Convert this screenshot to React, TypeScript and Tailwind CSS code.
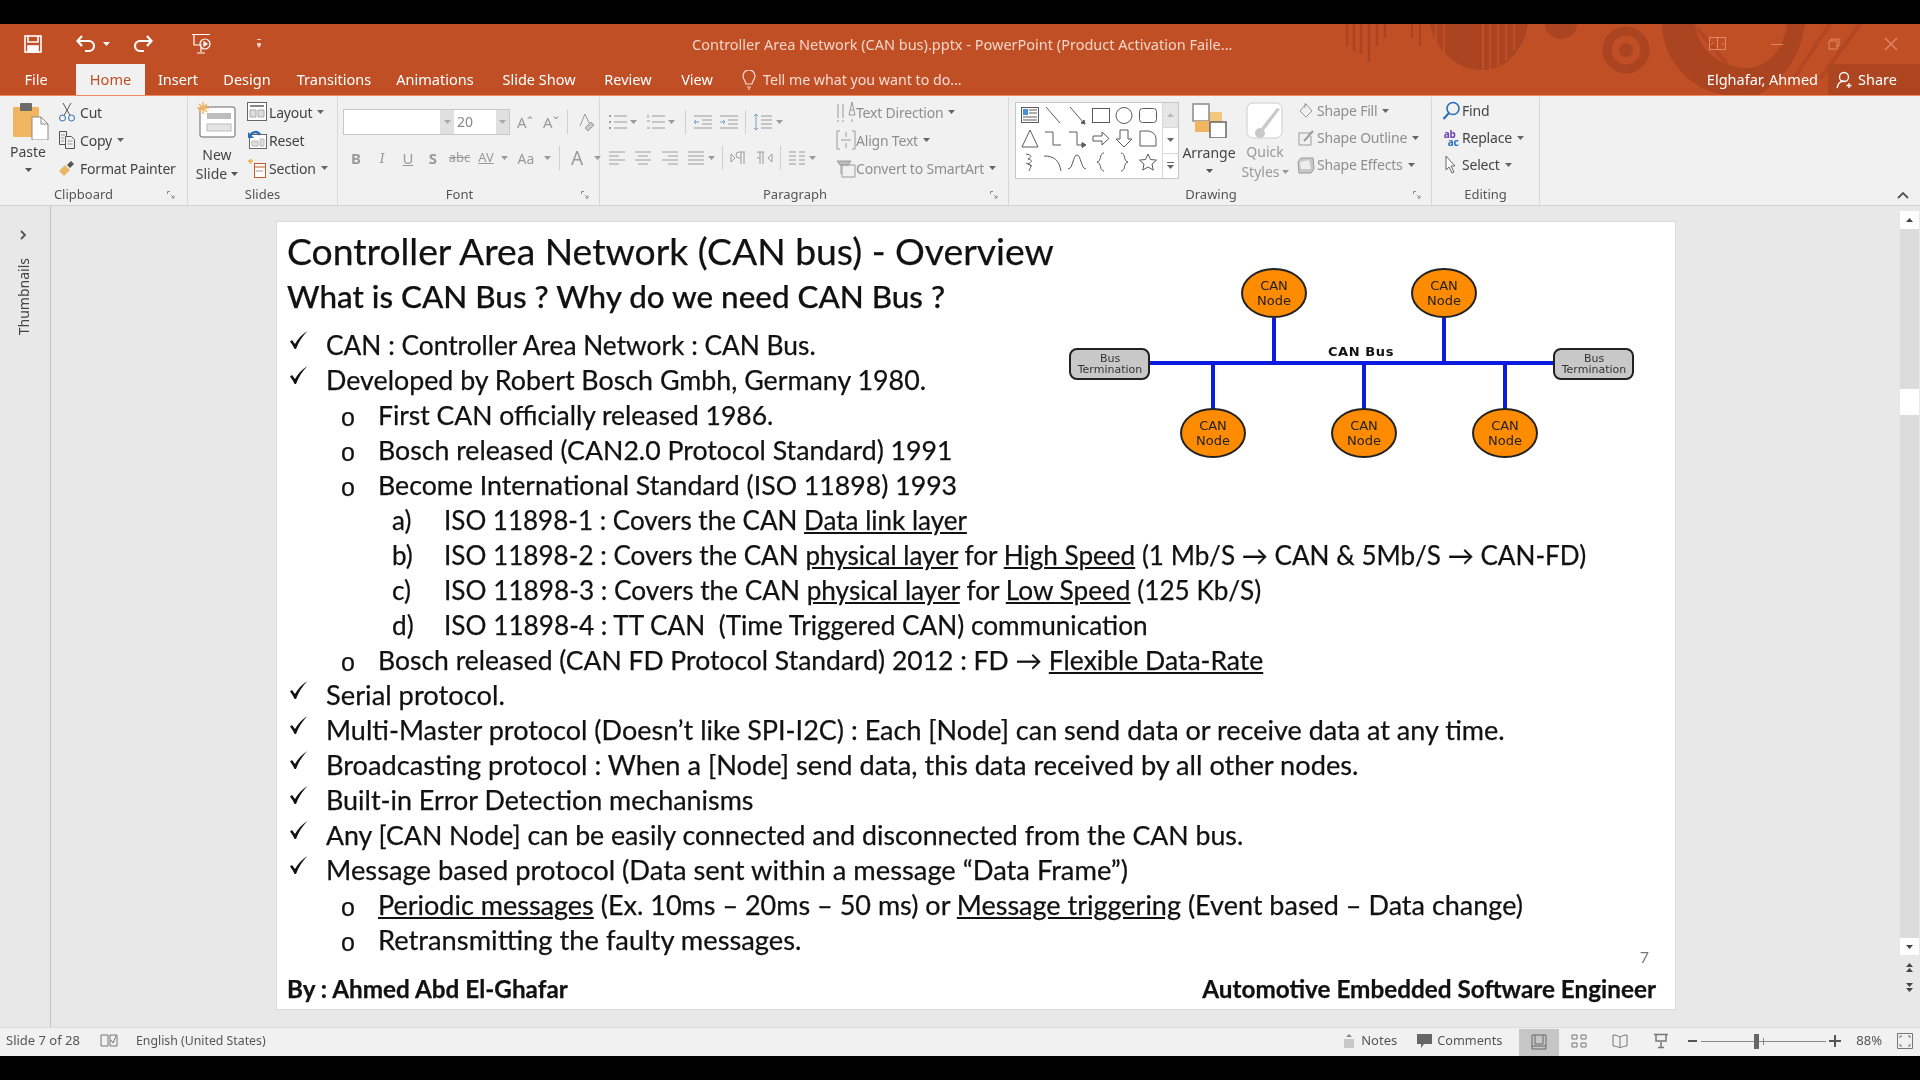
import React from "react";

const UI = "font-['Noto_Sans','Open_Sans',sans-serif]";

function Caret({ className = "" }: { className?: string }) {
  return (
    <svg width="7" height="4" viewBox="0 0 7 4" className={className}>
      <path d="M0 0h7L3.5 4z" fill="currentColor" />
    </svg>
  );
}

function Ico({ w = 18, h = 18, children, className = "" }: { w?: number; h?: number; children: React.ReactNode; className?: string }) {
  return (
    <svg width={w} height={h} viewBox={`0 0 ${w} ${h}`} fill="none" stroke="currentColor" strokeWidth="1" className={"shrink-0 " + className}>
      {children}
    </svg>
  );
}

function Launcher() {
  return (
    <svg width="8" height="8" viewBox="0 0 8 8" fill="none" stroke="#8a8a8a" strokeWidth="1" className="shrink-0">
      <path d="M.5 3V.5H3M4 4l3 3M7 4.5V7H4.5" />
    </svg>
  );
}

function Group({ w, label, launcher, labelPad = "", children }: { w: string; label: string; launcher?: boolean; labelPad?: string; children: React.ReactNode }) {
  return (
    <div className={`${w} flex flex-col h-[108px] mt-[1px] border-r border-[#d8d8d8]`}>
      <div className="flex h-[88px] min-h-0">{children}</div>
      <div className={`flex items-center h-[20px] text-[13px] text-[#555] ${labelPad}`}>
        <span className="flex-1 text-center">{label}</span>
        {launcher ? <span className="mr-[6px] flex"><Launcher /></span> : null}
      </div>
    </div>
  );
}

function SmallRow({ icon, label, caret, dim, iconW = "w-[22px]", gap = "ml-[1px]", h = "h-[28px]" }: { icon: React.ReactNode; label: string; caret?: boolean; dim?: boolean; iconW?: string; gap?: string; h?: string }) {
  return (
    <div className={`flex items-center ${h} text-[14px] tracking-[-0.2px] whitespace-nowrap ${dim ? "text-[#8f8f8f]" : "text-[#444]"}`}>
      <span className={`${iconW} flex justify-center`}>{icon}</span>
      <span className={gap}>{label}</span>
      {caret ? <Caret className="ml-[5px] text-[#666]" /> : null}
    </div>
  );
}

function Scissors() {
  return (
    <Ico w={18} h={20} className="text-[#2a6fb5]">
      <circle cx="4.5" cy="16" r="3" />
      <circle cx="13.5" cy="16" r="3" />
      <path d="M6 13.5 13 1M12 13.5 5 1" stroke="#555" />
    </Ico>
  );
}
function CopyI() {
  return (
    <Ico w={18} h={20} className="text-[#555]">
      <path d="M1.5 1.5h7v13h-7z" />
      <path d="M7.5 6.5h6l3 3v9h-9z" fill="#f1f1f1" />
      <path d="M3 5h4M3 8h3M3 11h3M9.5 11h5M9.5 14h5" stroke="#999" />
    </Ico>
  );
}
function Painter() {
  return (
    <svg width="18" height="18" viewBox="0 0 18 18">
      <path d="M1 12l6-6 5 5-6 6z" fill="#e9b765" />
      <path d="M9 6l4-4 3 3-4 4z" fill="#555" />
    </svg>
  );
}
function Clip() {
  return (
    <svg width="36" height="38" viewBox="0 0 36 38">
      <rect x="0" y="5" width="26" height="30" rx="1" fill="#f0b65f" />
      <rect x="7" y="1" width="12" height="8" rx="1" fill="#6b6b6b" />
      <path d="M19 15h9l7 7v16H19z" fill="#fff" stroke="#8a8a8a" />
      <path d="M28 15v7h7" fill="none" stroke="#8a8a8a" />
    </svg>
  );
}
function NewSlide() {
  return (
    <svg width="40" height="36" viewBox="0 0 40 36">
      <rect x="3" y="5" width="35" height="30" rx="2" fill="#fff" stroke="#666" />
      <rect x="10" y="11" width="24" height="6" fill="#bdbdbd" />
      <rect x="10" y="22" width="24" height="7" fill="#e5e5e5" stroke="#bbb" />
      <g stroke="#f0b65f" strokeWidth="1.5">
        <path d="M6 0v12M0 6h12M2 2l8 8M10 2l-8 8" />
      </g>
    </svg>
  );
}
function LayoutI() {
  return (
    <Ico w={20} h={20} className="text-[#666]">
      <rect x=".5" y=".5" width="19" height="18" fill="#fff" />
      <path d="M3 4h14" stroke="#888" strokeWidth="2" />
      <path d="M3 8h6v7H3zM11 8h6v7h-6z" fill="#ddd" stroke="#aaa" />
    </Ico>
  );
}
function ResetI() {
  return (
    <Ico w={20} h={20} className="text-[#666]">
      <rect x="2.5" y="4.5" width="17" height="14" fill="#fff" />
      <path d="M5 11h6v5H5zM13 9h4v7h-4z" fill="#ddd" stroke="#bbb" />
      <path d="M3 6c2-5 8-5 10-1" stroke="#2a6fb5" strokeWidth="2.5" />
      <path d="M1 2v6h6z" fill="#2a6fb5" stroke="none" />
    </Ico>
  );
}
function SectionI() {
  return (
    <Ico w={20} h={20} className="text-[#666]">
      <rect x="7.5" y="5.5" width="11" height="14" fill="#fff" stroke="#c55a2b" />
      <path d="M7 9h12" stroke="#c55a2b" />
      <path d="M1 3h5M3.500 1v5" stroke="#f0b65f" strokeWidth="2" />
      <path d="M9 13h7" stroke="#999" />
    </Ico>
  );
}
function Spin({ w }: { w: string }) {
  return (
    <span className={`${w} h-full bg-[#e0e0e0] flex items-center justify-center text-[#aaa]`}>
      <Caret />
    </span>
  );
}

function Shapes() {
  const s = "#5a5a5a";
  const cells: React.ReactNode[] = [
    <g key="a"><rect x="1.500" y="2.500" width="17" height="15" fill="#fff" /><rect x="3" y="4" width="5" height="6" fill="#4a90d9" stroke="none" /><path d="M9 5h8M9 8h8M3 12h14M3 15h14" /></g>,
    <path key="b" d="M3 2l14 16" />,
    <g key="c"><path d="M3 2l13 15" /><path d="M18 19l-4-1 3-3z" fill={s} /></g>,
    <rect key="d" x="1.500" y="3.500" width="17" height="14" />,
    <ellipse key="e" cx="10" cy="10.500" rx="8" ry="8" />,
    <rect key="f" x="1.500" y="3.500" width="17" height="14" rx="3" />,
    <path key="g" d="M10 2l8 17H2z" />,
    <path key="h" d="M2 4h8v13h8" />,
    <g key="i"><path d="M2 4h8v13h6" /><path d="M19 17l-4-2.500v5z" fill={s} /></g>,
    <path key="j" d="M2 8h9V4l7 6.500-7 6.500v-4H2z" />,
    <path key="k" d="M6 2h8v9h4l-8 8-8-8h4z" />,
    <path key="l" d="M2 18V3h7c5 0 9 3 9 8v7z" />,
    <path key="m" d="M6 2c6 1 6 3 2 5 5 1 4 3 0 5 5 1 2 4 1 7M6 11l6 3" />,
    <path key="n" d="M1 4c10 0 15 4 17 15" />,
    <path key="o" d="M1 17C6 17 6 3 10 3s4 14 9 14" />,
    <path key="p" d="M13 1c-5 0-2 8-7 9 5 1 2 9 7 9" />,
    <path key="q" d="M7 1c5 0 2 8 7 9-5 1-2 9-7 9" />,
    <path key="r" d="M10 2l2.500 5.500 6 .6-4.500 4 1.300 6L10 15l-5.300 3.100 1.300-6-4.500-4 6-.6z" />,
  ];
  return (
    <div className="flex w-[164px] h-[77px] mt-[5px] ml-[6px] bg-white border border-[#c6c6c6]">
      <div className="grid grid-cols-6 grid-rows-3 w-[146px] px-[2px] pt-[1px] pb-[4px]">
        {cells.map((c, i) => (
          <span key={i} className="flex items-center justify-center">
            <svg width="20" height="21" viewBox="0 0 20 21" fill="none" stroke={s} strokeWidth="1">{c}</svg>
          </span>
        ))}
      </div>
      <div className="flex flex-col flex-1 border-l border-[#d8d8d8] text-[#666]">
        <span className="flex-1 bg-[#e6e6e6] border-b border-[#d8d8d8] flex items-center justify-center text-[#bbb]"><Caret className="rotate-180" /></span>
        <span className="flex-1 border-b border-[#d8d8d8] flex items-center justify-center"><Caret /></span>
        <span className="flex-1 flex flex-col gap-[2px] items-center justify-center"><span className="w-[7px] h-px bg-[#666]" /><Caret /></span>
      </div>
    </div>
  );
}

function Ribbon() {
  const g = "text-[#9a9a9a]";
  return (
    <div className={`flex h-[111px] bg-[#f1f1f1] border-t border-t-[#f08a60] border-b border-b-[#d2d2d2] relative ${UI}`}>
      <Group w="w-[188px]" label="Clipboard" launcher labelPad="pr-[6px]">
        <div className="w-[56px] flex flex-col items-center pt-[5px] text-[14px] text-[#444]">
          <span className="flex pl-[5px]"><Clip /></span>
          <span className="mt-[2px] leading-[20px]">Paste</span>
          <Caret className="mt-[6px] text-[#555]" />
        </div>
        <div className="flex flex-col pt-[1px]">
          <SmallRow icon={<Scissors />} label="Cut" gap="ml-[2px]" />
          <SmallRow icon={<CopyI />} label="Copy" caret gap="ml-[2px]" />
          <SmallRow icon={<Painter />} label="Format Painter" gap="ml-[2px]" />
        </div>
      </Group>
      <Group w="w-[150px]" label="Slides">
        <div className="w-[58px] flex flex-col items-center pt-[5px] text-[14px] text-[#444] leading-[19px]">
          <NewSlide />
          <span className="mt-[7px]">New</span>
          <span className="flex items-center">Slide<Caret className="ml-[4px] text-[#555]" /></span>
        </div>
        <div className="flex flex-col pt-[1px]">
          <SmallRow icon={<LayoutI />} label="Layout" caret />
          <SmallRow icon={<ResetI />} label="Reset" />
          <SmallRow icon={<SectionI />} label="Section" caret />
        </div>
      </Group>
      <Group w="w-[262px]" label="Font" launcher labelPad="pr-[4px]">
        <div className={`flex flex-col pl-[5px] ${g}`}>
          <div className="flex items-center h-[26px] mt-[12px]">
            <div className="flex w-[167px] h-[26px] border border-[#c8c8c8] bg-white text-[14px] text-[#888] leading-[24px]">
              <span className="w-[96px]" />
              <Spin w="w-[14px]" />
              <span className="w-[42px] pl-[3px]">20</span>
              <Spin w="w-[13px]" />
            </div>
            <span className="w-[26px] ml-[2px] text-center text-[15px]">Aˆ</span>
            <span className="w-[26px] text-center text-[15px]">Aˇ</span>
            <span className="w-px h-[24px] bg-[#d0d0d0] ml-[3px]" />
            <span className="w-[36px] flex justify-center">
              <Ico w={18} h={20}><path d="M3 14 8 2l4 9" /><path d="M8 16l6-6 3 3-6 6z" fill="#c8c8c8" /></Ico>
            </span>
          </div>
          <div className="flex items-center h-[26px] mt-[10px] text-[15px]">
            <span className="w-[24px] ml-[1px] text-center font-bold">B</span>
            <span className="w-[28px] text-center italic font-serif">I</span>
            <span className="w-[24px] text-center underline">U</span>
            <span className="w-[26px] text-center font-bold">S</span>
            <span className="w-[27px] text-center text-[13px] line-through">abc</span>
            <span className="w-[26px] text-center text-[13px] underline">AV</span>
            <Caret className="ml-[2px]" />
            <span className="w-[36px] text-center text-[14px]">Aa</span>
            <Caret />
            <span className="w-px h-[24px] bg-[#d0d0d0] ml-[8px]" />
            <span className="w-[34px] text-center text-[19px]">A</span>
            <Caret />
          </div>
        </div>
      </Group>
      <Group w="w-[409px]" label="Paragraph" launcher labelPad="pr-[4px]">
        <div className={`w-[235px] flex flex-col pl-[8px] ${g}`}>
          <div className="flex items-center h-[26px] mt-[12px]">
            <Ico w={20} h={16}><path d="M6 2h13M6 8h13M6 14h13" /><path d="M1 2h2M1 8h2M1 14h2" strokeWidth="2" /></Ico>
            <Caret className="ml-[2px]" />
            <Ico w={20} h={16} className="ml-[9px]"><path d="M6 2h13M6 8h13M6 14h13" /><path d="M2 1v3M1 7h3M1 14h3" /></Ico>
            <Caret className="ml-[2px]" />
            <span className="w-px h-[24px] bg-[#d0d0d0] ml-[10px]" />
            <Ico w={20} h={16} className="ml-[7px]"><path d="M1 2h18M9 6h10M9 10h10M1 14h18" /><path d="M6 8H1m2-2L1 8l2 2" stroke="#7a9cc0" /></Ico>
            <Ico w={20} h={16} className="ml-[6px]"><path d="M1 2h18M9 6h10M9 10h10M1 14h18" /><path d="M1 8h5m-2-2 2 2-2 2" stroke="#7a9cc0" /></Ico>
            <span className="w-px h-[24px] bg-[#d0d0d0] ml-[6px]" />
            <Ico w={20} h={18} className="ml-[7px]"><path d="M8 3h11M8 7h11M8 11h11M8 15h11" /><path d="M3 1v16M1 3l2-2 2 2M1 15l2 2 2-2" stroke="#7a9cc0" /></Ico>
            <Caret className="ml-[3px]" />
          </div>
          <div className="flex items-center h-[26px] mt-[10px]">
            <Ico w={18} h={16}><path d="M1 2h16M1 6h10M1 10h16M1 14h10" stroke="#c8c8c8" strokeWidth="2" /></Ico>
            <Ico w={18} h={16} className="ml-[8px]"><path d="M1 2h16M4 6h10M1 10h16M4 14h10" stroke="#c8c8c8" strokeWidth="2" /></Ico>
            <Ico w={18} h={16} className="ml-[9px]"><path d="M1 2h16M7 6h10M1 10h16M7 14h10" stroke="#c8c8c8" strokeWidth="2" /></Ico>
            <Ico w={18} h={16} className="ml-[8px]"><path d="M1 2h16M1 6h16M1 10h16M1 14h16" /></Ico>
            <Caret className="ml-[3px]" />
            <span className="w-px h-[24px] bg-[#d0d0d0] ml-[7px]" />
            <Ico w={16} h={14} className="ml-[7px]"><path d="M1 3v8l4-4zM9 1h6M11 1v12M14 1v12M9 1a3 3 0 0 0 0 6h2" /></Ico>
            <Ico w={16} h={14} className="ml-[11px]"><path d="M15 3v8l-4-4zM1 1h6M3 1v12M6 1v12M1 1a3 3 0 0 0 0 6h2" /></Ico>
            <span className="w-px h-[24px] bg-[#d0d0d0] ml-[7px]" />
            <Ico w={18} h={16} className="ml-[7px]"><path d="M1 2h7M1 6h7M1 10h7M1 14h7M11 2h6M11 6h6M11 10h6M11 14h6" /></Ico>
            <Caret className="ml-[3px]" />
          </div>
        </div>
        <div className="flex flex-col pt-[1px]">
          <SmallRow dim iconW="w-[21px]" gap="" icon={<Ico w={20} h={22} className="text-[#9a9a9a]"><path d="M2 3v14M7 3v14M16 1l-3 13h6zM14 9h4" /><path d="M2 19v2M7 19v2M16 18v3" /></Ico>} label="Text Direction" caret />
          <SmallRow dim iconW="w-[21px]" gap="" icon={<Ico w={20} h={20} className="text-[#9a9a9a]"><path d="M1 1v18h3M19 1v18h-3M1 1h3M19 1h-3M5 10h10M10 2v5M10 13v5" /></Ico>} label="Align Text" caret />
          <SmallRow dim iconW="w-[21px]" gap="" icon={<Ico w={20} h={20} className="text-[#9a9a9a]"><path d="M6 7h13v12H6z" /><path d="M1 3h14l-3 4H4z" fill="#bdbdbd" /><path d="M5 7v9" /></Ico>} label="Convert to SmartArt" caret />
        </div>
      </Group>
      <Group w="w-[423px]" label="Drawing" launcher labelPad="pr-[4px]">
        <Shapes />
        <div className="w-[60px] flex flex-col items-center pt-[5px] text-[14px] text-[#444]">
          <svg width="36" height="36" viewBox="0 0 36 36">
            <rect x="16" y="10" width="15" height="16" fill="#f3c77e" />
            <rect x="2" y="2" width="16" height="17" fill="#fff" stroke="#8a8a8a" strokeWidth="1.500" />
            <rect x="4" y="19" width="15" height="11" fill="#f0b65f" />
            <rect x="19" y="20" width="16" height="16" fill="#fff" stroke="#666" strokeWidth="1.500" />
          </svg>
          <span className="mt-[5px] leading-[20px]">Arrange</span>
          <Caret className="mt-[6px] text-[#555]" />
        </div>
        <div className="w-[52px] flex flex-col items-center pt-[5px] text-[14px] text-[#999] leading-[20px]">
          <svg width="38" height="38" viewBox="0 0 38 38" fill="none">
            <rect x="1" y="1" width="35" height="35" rx="6" fill="#fff" stroke="#ccc" />
            <path d="M34 7 19 27l-5 3 2-5L31 6z" fill="#c9c9c9" />
            <circle cx="14" cy="31" r="5" fill="#c9c9c9" />
          </svg>
          <span className="mt-[2px]">Quick</span>
          <span className="flex items-center">Styles<Caret className="ml-[2px]" /></span>
        </div>
        <div className="flex flex-col ml-[5px]">
          <SmallRow h="h-[27px]" dim iconW="w-[20px]" icon={<Ico w={18} h={18} className="text-[#9a9a9a]"><path d="M9 2l6 7-6 6-6-6z" /><path d="M8 1v5" /></Ico>} label="Shape Fill" caret />
          <SmallRow h="h-[27px]" dim iconW="w-[20px]" icon={<Ico w={18} h={18} className="text-[#9a9a9a]"><path d="M13 4H2v12h12V7" /><path d="M7 12 16 2" strokeWidth="2" /></Ico>} label="Shape Outline" caret />
          <SmallRow h="h-[27px]" dim iconW="w-[20px]" icon={<svg width="18" height="18" viewBox="0 0 18 18"><path d="M4 2h12l1 11-3 4H2L1 6z" fill="#c8c8c8" stroke="#9a9a9a" /><path d="M3 6l9-2 2 9H4z" fill="#eee" /></svg>} label="Shape Effects" caret />
        </div>
      </Group>
      <Group w="w-[108px]" label="Editing">
        <div className="flex flex-col pl-[9px]">
          <SmallRow h="h-[27px]" iconW="w-[20px]" icon={<Ico w={18} h={19} className="text-[#2a6fb5]"><circle cx="11" cy="7.500" r="6" strokeWidth="1.600" /><path d="M7 12 1.500 18" strokeWidth="2.200" /></Ico>} label="Find" />
          <SmallRow h="h-[27px]" iconW="w-[20px]" icon={<span className="flex flex-col text-[10px] leading-[8px] font-bold text-[#6a3fb5]"><span>ab</span><span className="text-[#2a6fb5] pl-[4px]">ac</span></span>} label="Replace" caret />
          <SmallRow h="h-[27px]" iconW="w-[20px]" icon={<Ico w={14} h={20} className="text-[#666]"><path d="M2 1v14l3-3 3 6 2-1-3-6h4z" fill="#fff" /></Ico>} label="Select" caret />
        </div>
      </Group>
      <svg width="14" height="8" viewBox="0 0 14 8" className="absolute right-[10px] bottom-[6px] text-[#555]" fill="none" stroke="currentColor" strokeWidth="1.800"><path d="M2 7l5-5 5 5" /></svg>
    </div>
  );
}

function Art() {
  const c = "#ab4420";
  return (
    <svg width="640" height="71" viewBox="1280 24 640 71" className="absolute right-0 top-0" fill="none">
      <g stroke={c} strokeWidth="2.500">
        <path d="M1347 24v22M1354 24v27M1361 24v30M1369 24v38M1377 24v22M1385 24v14M1412 24v14M1420 24v22" />
      </g>
      <path d="M1430 24h98c-4 24-20 46-46 46-26 0-48-22-52-46z" fill={c} />
      <path d="M1436 24v26M1444 24v36M1483 24v46M1490 24v46M1498 24v42M1506 24v36M1514 24v26" stroke="#c14f26" strokeWidth="2" />
      <path d="M1545 24c0 8 7 15 16 15s16-7 16-15z" fill={c} />
      <circle cx="1626" cy="50" r="19" stroke={c} strokeWidth="9" />
      <circle cx="1626" cy="50" r="7" fill={c} />
      <path d="M1662 24c0 30 22 64 62 71h34c26-14 44-42 47-71h-18c-3 24-18 44-40 44-28 0-50-20-52-44z" fill={c} />
      <path d="M1682 30l50 60M1697 28l50 60M1800 24l-30 40M1830 24l-40 60M1860 24l-40 55" stroke={c} strokeWidth="4" opacity=".7" />
    </svg>
  );
}

function TitleBar() {
  return (
    <div className={`relative bg-[#c14f26] h-[71px] text-white ${UI}`}>
      <Art />
      <div className="relative flex items-center h-[40px] pl-[24px]">
        <svg width="18" height="18" viewBox="0 0 18 18" fill="none" stroke="#fff" strokeWidth="1.600"><rect x="1" y="1" width="16" height="16" /><path d="M4 1v6h10V1" /><rect x="4" y="11" width="10" height="6" fill="#fff" /></svg>
        <svg width="20" height="18" viewBox="0 0 20 18" fill="none" stroke="#fff" strokeWidth="2.200" className="ml-[34px]"><path d="M2 6h11a4.500 4.500 0 0 1 0 10H9M6 1 1.500 6 6 11" /></svg>
        <Caret className="ml-[7px]" />
        <svg width="20" height="18" viewBox="0 0 20 18" fill="none" stroke="#fff" strokeWidth="2.200" className="ml-[23px]"><path d="M18 6H7a4.500 4.500 0 0 0 0 10h4M14 1l4.500 5L14 11" /></svg>
        <svg width="22" height="22" viewBox="0 0 22 22" fill="none" stroke="#fff" strokeWidth="1.200" className="ml-[38px]"><path d="M1 1.500h18M3 2v10h8M10 14v5M6 20h8" /><circle cx="14" cy="11" r="5" /><path d="M13 9l3 2-3 2z" fill="#fff" /></svg>
        <svg width="6" height="10" viewBox="0 0 6 10" fill="#f5d0c0" className="ml-[43px]"><path d="M1 0h4v1H1zM1 4h4v2l-2 3-2-3z" /></svg>
        <span className="absolute left-[692px] top-[10px] text-[14.500px] text-[#f3d5c8] whitespace-nowrap">Controller Area Network (CAN bus).pptx - PowerPoint (Product Activation Faile...</span>
        <div className="ml-auto flex items-center text-[#e08a68]">
          <svg width="18" height="14" viewBox="0 0 18 14" fill="none" stroke="currentColor"><rect x=".5" y=".5" width="16" height="12" /><path d="M8.500 1v11M4 6l-2 2M13 6l2 2" /></svg>
          <span className="w-[12px] h-px bg-current ml-[44px]" />
          <svg width="12" height="12" viewBox="0 0 12 12" fill="none" stroke="currentColor" className="ml-[45px]"><path d="M3 3V1h8v7H9M1 3h8v8H1z" /></svg>
          <svg width="14" height="14" viewBox="0 0 14 14" fill="none" stroke="currentColor" strokeWidth="1.300" className="ml-[44px] mr-[22px]"><path d="M1 1l12 12M13 1 1 13" /></svg>
        </div>
      </div>
      <div className="relative flex items-end h-[31px] text-[14.500px]">
        <span className="w-[72px] h-[31px] leading-[31px] text-center">File</span>
        <span className="w-[69px] ml-[4px] h-[31px] leading-[30px] text-center bg-[#f1f1f1] text-[#c14f26]">Home</span>
        <div className="flex h-[31px] leading-[30px] whitespace-nowrap text-center">
          <span className="w-[66px]">Insert</span>
          <span className="w-[72px]">Design</span>
          <span className="w-[102px]">Transitions</span>
          <span className="w-[100px]">Animations</span>
          <span className="w-[108px]">Slide Show</span>
          <span className="w-[70px]">Review</span>
          <span className="w-[68px]">View</span>
        </div>
        <div className="flex items-center h-[31px] ml-[11px] whitespace-nowrap text-[#f5ddd2] text-[14.200px]">
          <svg width="14" height="20" viewBox="0 0 14 20" fill="none" stroke="currentColor" strokeWidth="1.200"><path d="M4 14c0-3-3-4-3-8a6 6 0 0 1 12 0c0 4-3 5-3 8zM5 17h4M6 19h2" /></svg>
          <span className="ml-[7px]">Tell me what you want to do...</span>
        </div>
        <div className="ml-auto flex items-center h-[31px] whitespace-nowrap">
          <span>Elghafar, Ahmed</span>
          <div className="flex items-center h-[31px] ml-[10px] pl-[8px] w-[92px] bg-[#ad4520]">
            <svg width="18" height="18" viewBox="0 0 18 18" fill="none" stroke="#fff" strokeWidth="1.300"><circle cx="8" cy="6" r="4.500" /><path d="M1 17c1-5 4-7 7-7M13 12v5M10.500 14.500h5" /></svg>
            <span className="ml-[4px]">Share</span>
          </div>
        </div>
      </div>
    </div>
  );
}

function Check() {
  return (
    <span className="w-[38px] flex items-start self-start pt-[3px] pl-[1px]">
      <svg width="19" height="18" viewBox="0 0 19 18"><path d="M1 10.500l2-1.500 3 4C9 7.500 13 3.500 18.500 0 13.500 5 9.500 11 7 18H5.600C4.500 15.500 3 13 1 10.500z" fill="#111" /></svg>
    </span>
  );
}

function L1({ s, children }: { s: string; children: React.ReactNode }) {
  return <div className={`flex h-[35px] items-center pl-[11px] ${s}`}><Check /><span>{children}</span></div>;
}
function L2({ s, children }: { s: string; children: React.ReactNode }) {
  return (
    <div className={`flex h-[35px] items-center pl-[64px] ${s}`}>
      <span className="w-[37px] text-[25px] leading-[35px] pt-[3px] font-['Liberation_Sans']">o</span>
      <span>{children}</span>
    </div>
  );
}
function L3({ m, s = "", children }: { m: string; s?: string; children: React.ReactNode }) {
  return <div className={`flex h-[35px] items-center pl-[115px] ${s}`}><span className="w-[52px]">{m}</span><span className="whitespace-pre">{children}</span></div>;
}

function Slide() {
  return (
    <div className="relative w-[1400px] h-[789px] bg-white border border-[#dcdcdc] text-[#111] font-['Lato',sans-serif] shrink-0 [-webkit-text-stroke:0.25px_#111]">
      <svg width="570" height="220" viewBox="1065 255 570 220" className="absolute left-[788px] top-[33px] [-webkit-text-stroke:0]">
        <g stroke="#0b1be0" strokeWidth="4">
          <path d="M1150 363h404M1274 318v45M1444 318v45M1213 363v46M1364 363v46M1505 363v46" />
        </g>
        <text x="1361" y="356" textAnchor="middle" fontFamily="DejaVu Sans" fontWeight="700" fontSize="13" letterSpacing=".6" fill="#111">CAN Bus</text>
        {[[1274, 293], [1444, 293], [1213, 433], [1364, 433], [1505, 433]].map(([x, y]) => (
          <g key={`${x}`}>
            <ellipse cx={x} cy={y} rx="32" ry="24" fill="#ff8c00" stroke="#222" strokeWidth="2" />
            <text x={x} y={y - 3} textAnchor="middle" fontFamily="DejaVu Sans" fontSize="13" fill="#222">CAN</text>
            <text x={x} y={y + 12} textAnchor="middle" fontFamily="DejaVu Sans" fontSize="13" fill="#222">Node</text>
          </g>
        ))}
        {[1070, 1554].map((x) => (
          <g key={x}>
            <rect x={x} y="349" width="79" height="30" rx="7" fill="#c8c8c8" stroke="#222" strokeWidth="2" />
            <text x={x + 40} y="362" textAnchor="middle" fontFamily="DejaVu Sans" fontSize="11" fill="#333">Bus</text>
            <text x={x + 40} y="373" textAnchor="middle" fontFamily="DejaVu Sans" fontSize="11" fill="#333">Termination</text>
          </g>
        ))}
      </svg>
      <div className="pl-[10px] pt-[6px] text-[37.300px] leading-[46px] whitespace-nowrap">Controller Area Network (CAN bus) - Overview</div>
      <div className="pl-[10px] pt-[2px] text-[31.400px] leading-[40px] font-medium whitespace-nowrap">What is CAN Bus ? Why do we need CAN Bus ?</div>
      <div className="mt-[12px] text-[26px] whitespace-nowrap">
        <L1 s="text-[26.300px]">CAN : Controller Area Network : CAN Bus.</L1>
        <L1 s="text-[26.800px]">Developed by Robert Bosch Gmbh, Germany 1980.</L1>
        <L2 s="text-[26.500px]">First CAN officially released 1986.</L2>
        <L2 s="text-[26.700px]">Bosch released (CAN2.0 Protocol Standard) 1991</L2>
        <L2 s="text-[26.700px]">Become International Standard (ISO 11898) 1993</L2>
        <L3 m="a)">ISO 11898-1 : Covers the CAN <u>Data link layer</u></L3>
        <L3 m="b)" s="text-[26.100px]">ISO 11898-2 : Covers the CAN <u>physical layer</u> for <u>High Speed</u> (1 Mb/S → CAN &amp; 5Mb/S → CAN-FD)</L3>
        <L3 m="c)" s="text-[26.200px]">ISO 11898-3 : Covers the CAN <u>physical layer</u> for <u>Low Speed</u> (125 Kb/S)</L3>
        <L3 m="d)" s="text-[26.200px]">{"ISO 11898-4 : TT CAN  (Time Triggered CAN) communication"}</L3>
        <L2 s="text-[26.500px]">Bosch released (CAN FD Protocol Standard) 2012 : FD → <u>Flexible Data-Rate</u></L2>
        <L1 s="text-[27.300px]">Serial protocol.</L1>
        <L1 s="text-[27px]">Multi-Master protocol (Doesn’t like SPI-I2C) : Each [Node] can send data or receive data at any time.</L1>
        <L1 s="text-[27.200px]">Broadcasting protocol : When a [Node] send data, this data received by all other nodes.</L1>
        <L1 s="text-[26.900px]">Built-in Error Detection mechanisms</L1>
        <L1 s="text-[26.700px]">Any [CAN Node] can be easily connected and disconnected from the CAN bus.</L1>
        <L1 s="text-[27.300px]">Message based protocol (Data sent within a message “Data Frame”)</L1>
        <L2 s="text-[27px]"><u>Periodic messages</u> (Ex. 10ms – 20ms – 50 ms) or <u>Message triggering</u> (Event based – Data change)</L2>
        <L2 s="text-[27.300px]">Retransmitting the faulty messages.</L2>
      </div>
      <span className="absolute right-[26px] top-[723px] text-[16px] text-[#777] [-webkit-text-stroke:0]">7</span>
      <div className="flex justify-between px-[10px] mt-[14px] pr-[19px] text-[24.300px] leading-[34px] font-bold whitespace-nowrap">
        <span>By : Ahmed Abd El-Ghafar</span>
        <span>Automotive Embedded Software Engineer</span>
      </div>
    </div>
  );
}

function Main() {
  return (
    <div className={`flex flex-1 min-h-0 bg-[#e8e8e8] ${UI}`}>
      <div className="w-[51px] border-r border-[#c4c4c4] flex flex-col items-center pt-[24px] pr-[4px] text-[#555]">
        <svg width="7" height="10" viewBox="0 0 7 10" fill="none" stroke="currentColor" strokeWidth="1.800"><path d="M1 1l4 4-4 4" /></svg>
        <span className="mt-[18px] text-[14px] [writing-mode:vertical-rl] rotate-180 text-[#444]">Thumbnails</span>
      </div>
      <div className="flex-1 pt-[15px] pl-[225px]">
        <Slide />
      </div>
      <div className="w-[19px] mr-[1px] flex flex-col items-center bg-[#dcdcdc] mt-[5px] text-[#444]">
        <span className="w-full h-[18px] bg-white flex items-center justify-center"><Caret className="rotate-180" /></span>
        <span className="w-full h-[26px] bg-white mt-[160px]" />
        <span className="flex-1" />
        <span className="w-full h-[17px] bg-white flex items-center justify-center"><Caret /></span>
        <div className="w-[21px] bg-[#e8e8e8] flex flex-col items-center pt-[8px] h-[72px] gap-[7px]">
          <span className="flex flex-col items-center gap-px"><Caret className="rotate-180" /><Caret className="rotate-180" /></span>
          <span className="flex flex-col items-center gap-px pt-[4px]"><Caret /><Caret /></span>
        </div>
      </div>
    </div>
  );
}

function Status() {
  return (
    <div className={`flex items-center h-[29px] pb-[2px] bg-[#f1f1f1] border-t border-[#dcdcdc] text-[13px] text-[#555] whitespace-nowrap ${UI}`}>
      <span className="ml-[6px]">Slide 7 of 28</span>
      <svg width="18" height="16" viewBox="0 0 18 16" fill="none" stroke="#777" className="ml-[20px]"><path d="M1 2h7v11H1zM10 2h7v11h-7zM11 7l2 3 3-7" /></svg>
      <span className="ml-[18px] text-[12.300px]">English (United States)</span>
      <svg width="12" height="16" viewBox="0 0 12 16" className="ml-auto"><path d="M6 1l3 3H3z" fill="#888" /><rect x="1" y="6" width="10" height="9" fill="#c8c8c8" /></svg>
      <span className="ml-[6px]">Notes</span>
      <svg width="15" height="16" viewBox="0 0 15 16" className="ml-[20px]"><path d="M0 1h15v10H7l-3 4v-4H0z" fill="#666" /></svg>
      <span className="ml-[5px] text-[12.700px]">Comments</span>
      <span className="ml-[17px] w-[40px] h-[27px] -mb-[2px] bg-[#c6c6c6] flex items-center justify-center">
        <svg width="16" height="16" viewBox="0 0 16 16" fill="none" stroke="#666"><path d="M1 1h14v14H1zM4 1v9h8V1M1 12h14" /></svg>
      </span>
      <svg width="16" height="14" viewBox="0 0 16 14" fill="none" stroke="#777" className="ml-[12px]"><path d="M1 1h5v4H1zM10 1h5v4h-5zM1 9h5v4H1zM10 9h5v4h-5z" /></svg>
      <svg width="16" height="14" viewBox="0 0 16 14" fill="none" stroke="#777" className="ml-[25px]"><path d="M1 1c3 0 5 1 7 2 2-1 4-2 7-2v11c-3 0-5 1-7 2-2-1-4-2-7-2zM8 3v11" /></svg>
      <svg width="16" height="16" viewBox="0 0 16 16" fill="none" stroke="#777" className="ml-[25px]"><path d="M1 1.500h14M3 2v6h10V2M8 9v5M5 14.500h6" strokeWidth="1.500" /></svg>
      <span className="ml-[19px] w-[9px] h-[2px] bg-[#555]" />
      <div className="relative ml-[4px] w-[125px] h-px bg-[#888]">
        <span className="absolute left-[53px] -top-[7px] w-[5px] h-[15px] bg-[#666]" />
        <span className="absolute left-[62px] -top-[3px] w-px h-[7px] bg-[#888]" />
      </div>
      <svg width="12" height="12" viewBox="0 0 12 12" stroke="#555" strokeWidth="2" className="ml-[3px]"><path d="M6 0v12M0 6h12" /></svg>
      <span className="ml-[15px]">88%</span>
      <svg width="16" height="16" viewBox="0 0 16 16" fill="none" stroke="#777" className="ml-[15px] mr-[7px]"><path d="M.5.500h15v15H.5zM4 2v2H2M12 2v2h2M4 14v-2H2M12 14v-2h2" /></svg>
    </div>
  );
}

export default function App() {
  return (
    <div className="w-[1920px] h-[1080px] flex flex-col bg-black overflow-hidden blur-[0.5px]">
      <div className="h-[24px] shrink-0 bg-black" />
      <TitleBar />
      <Ribbon />
      <Main />
      <Status />
      <div className="h-[24px] shrink-0 bg-black" />
    </div>
  );
}
